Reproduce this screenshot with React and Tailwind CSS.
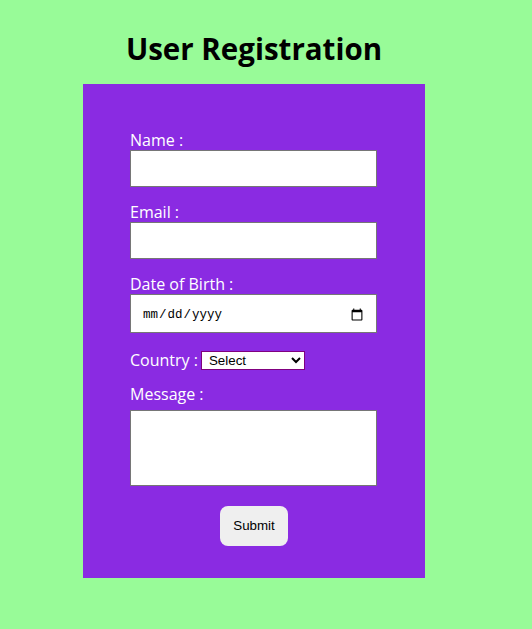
import React from 'react'

export default function App() {
  const label = "block text-white text-[16px] leading-[20px]"
  const field = "block w-[247px] bg-white border border-[#767676] outline-none"

  return (
    <div className="min-h-[629px] bg-[#98fb98] font-['Trebuchet_MS','Open_Sans',sans-serif]">
      <div className="w-[508px] flex flex-col items-center pt-[29px]">
        <h1 className="text-[29.5px] leading-[40px] font-bold text-black mb-[15px]">User Registration</h1>

        <form
          onSubmit={e => e.preventDefault()}
          className="w-[342px] h-[494px] bg-[#8a2be2] pt-[46px] px-[47px]"
        >
          {/* Name */}
          <label className={label}>Name :</label>
          <input type="text" className={`${field} h-[37px] px-2 text-sm`} />

          {/* Email */}
          <label className={`${label} mt-[15px]`}>Email :</label>
          <input type="email" className={`${field} h-[37px] px-2 text-sm`} />

          {/* Date of Birth */}
          <label className={`${label} mt-[15px]`}>Date of Birth :</label>
          <input
            type="date"
            className={`${field} h-[39px] pl-[11px] pr-[10px] pt-[3px] text-[12.5px] font-['Liberation_Mono',monospace] [&::-webkit-calendar-picker-indicator]:w-[14px] [&::-webkit-calendar-picker-indicator]:h-[14px]`}
          />

          {/* Country */}
          <div className="flex items-center mt-[16px] h-[22px]">
            <label className="text-white text-[16px] leading-[20px] mr-[3px]">Country :</label>
            <select className="w-[104px] h-[19px] border border-[#800080] bg-white text-[13.33px] text-black font-['Liberation_Sans',Arial,sans-serif] pl-[3px]">
              <option>Select</option>
              <option>India</option>
              <option>USA</option>
              <option>UK</option>
            </select>
          </div>

          {/* Message */}
          <label className={`${label} mt-[13px] mb-[6px]`}>Message :</label>
          <textarea className={`${field} h-[76px] resize-none p-2 text-sm`} />

          <div className="flex justify-center mt-[20px]">
            <button
              type="submit"
              className="w-[68px] h-[40px] rounded-[8px] bg-[#efefef] text-black text-[13.33px] font-['Liberation_Sans',Arial,sans-serif]"
            >
              Submit
            </button>
          </div>
        </form>
      </div>
    </div>
  )
}
